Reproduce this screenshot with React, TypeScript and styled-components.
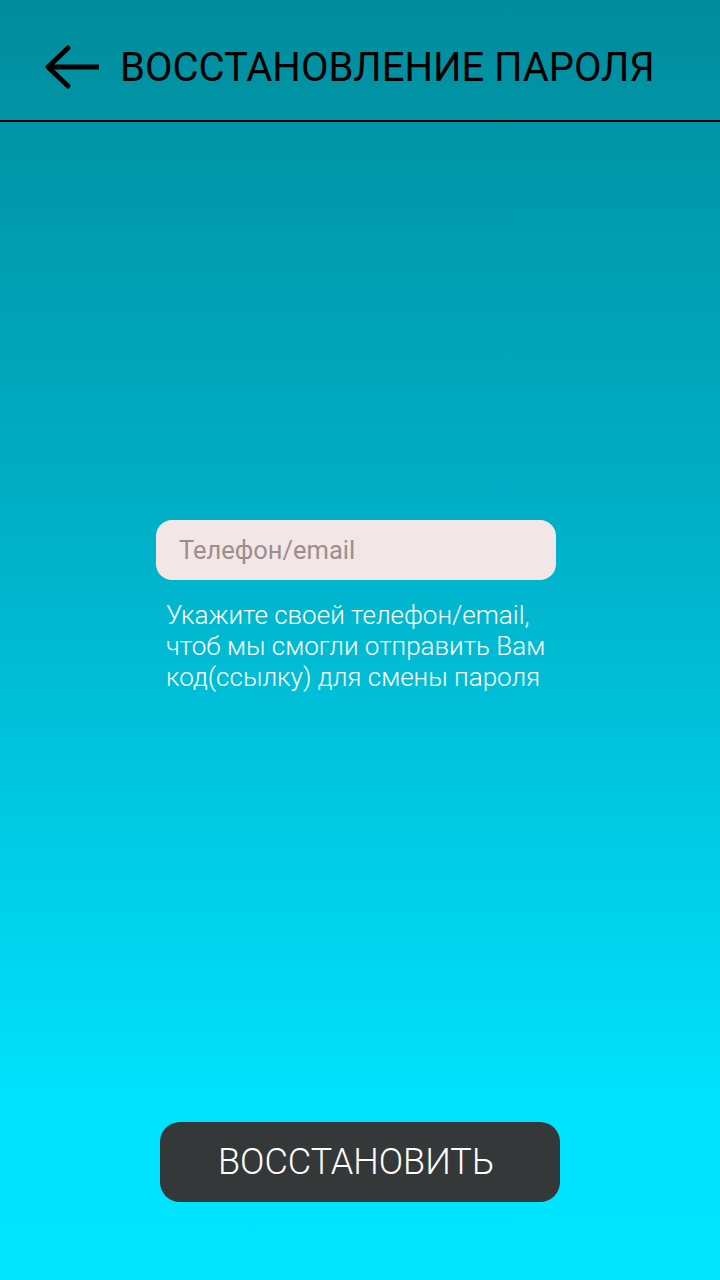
import React from "react";
import styled, { createGlobalStyle } from "styled-components";

const GlobalStyle = createGlobalStyle`
  html, body { margin: 0; padding: 0; }
  body { font-family: Roboto, "Noto Sans", sans-serif; }
  * { box-sizing: border-box; }
`;

const Page = styled.div`
  width: 720px;
  height: 1280px;
  display: flex;
  flex-direction: column;
  background: linear-gradient(180deg, #018c9c 0%, #00b4cc 45%, #00e3fe 87%, #00e4ff 100%);
`;

const Header = styled.header`
  height: 122px;
  flex-shrink: 0;
  display: flex;
  align-items: center;
  padding: 14px 0 0 43px;
  border-bottom: 2px solid #000;
  gap: 17px;
`;

const BackButton = styled.button`
  background: none;
  border: none;
  padding: 0;
  width: 60px;
  height: 48px;
  display: flex;
  align-items: center;
  cursor: pointer;
`;

const Title = styled.h1`
  margin: 0;
  font-family: Roboto, sans-serif;
  font-weight: 400;
  font-size: 40px;
  letter-spacing: 0;
  color: #000;
`;

const Main = styled.main`
  flex: 1;
  display: flex;
  flex-direction: column;
  align-items: center;
  padding-top: 398px;
`;

const Field = styled.div`
  width: 400px;
  margin-right: 8px;
  display: flex;
  flex-direction: column;
`;

const Input = styled.input`
  width: 400px;
  height: 60px;
  border: none;
  border-radius: 16px;
  background: #f2e6e6;
  padding: 0 23px;
  font-family: Roboto, sans-serif;
  font-size: 25.5px;
  color: #333;
  outline: none;
  &::placeholder { color: #9c8e8e; }
`;

const Hint = styled.p`
  margin: 20px 0 0 10px;
  font-family: Roboto, sans-serif;
  font-weight: 300;
  font-size: 26px;
  line-height: 31px;
  color: #fff;
`;

const Footer = styled.div`
  display: flex;
  justify-content: center;
  padding-bottom: 78px;
`;

const SubmitButton = styled.button`
  width: 400px;
  height: 80px;
  border: none;
  border-radius: 20px;
  background: #353839;
  color: #fff;
  padding: 0 8px 0 0;
  font-family: Roboto, sans-serif;
  font-weight: 300;
  font-size: 36px;
  cursor: pointer;
`;

const BackArrow = () => (
  <svg width="60" height="48" viewBox="0 0 60 48">
    <path d="M56 24 H6" stroke="#000" strokeWidth="5" fill="none" />
    <path d="M25 5 L5 24 L25 43" stroke="#000" strokeWidth="5" strokeLinecap="round" strokeLinejoin="round" fill="none" />
  </svg>
);

export default function App() {
  return (
    <>
      <GlobalStyle />
      <Page>
        <Header>
          <BackButton aria-label="Назад">
            <BackArrow />
          </BackButton>
          <Title>ВОССТАНОВЛЕНИЕ ПАРОЛЯ</Title>
        </Header>
        <Main>
          <Field>
            <Input placeholder="Телефон/email" />
            <Hint>
              Укажите своей телефон/email,<br />
              чтоб мы смогли отправить Вам<br />
              код(ссылку) для смены пароля
            </Hint>
          </Field>
        </Main>
        <Footer>
          <SubmitButton>ВОССТАНОВИТЬ</SubmitButton>
        </Footer>
      </Page>
    </>
  );
}
